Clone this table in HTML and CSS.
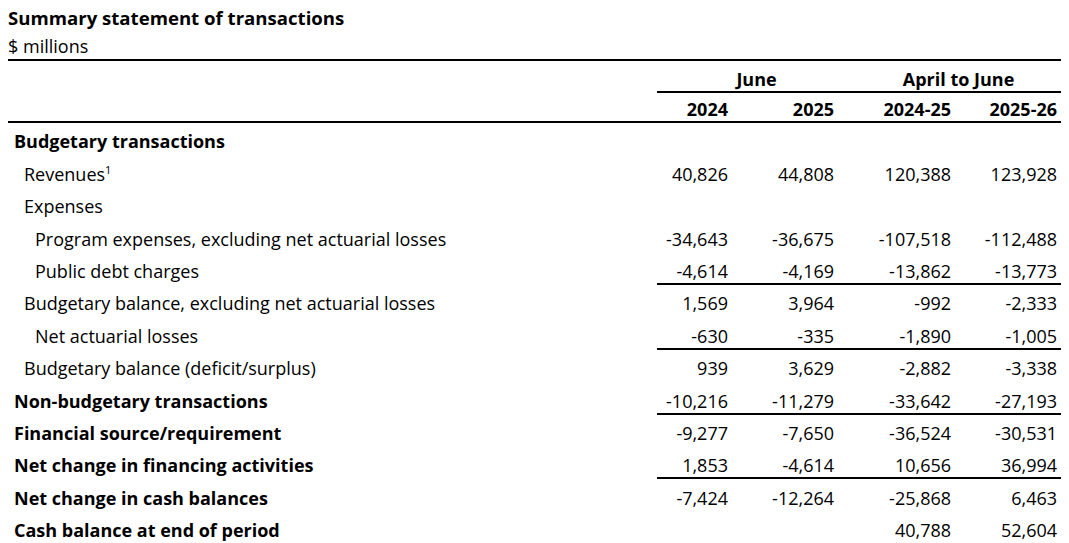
FILE: index.html
```html
<!DOCTYPE html>
<html lang="en">
<head>
<meta charset="utf-8">
<title>Summary statement of transactions</title>
<link rel="stylesheet" href="styles.css">
</head>
<body>
<div class="page">
  <h1 class="title">Summary statement of transactions</h1>
  <p class="unit">$ millions</p>
  <table class="summary">
    <colgroup>
      <col class="c-label">
      <col class="c-1">
      <col class="c-2">
      <col class="c-3">
      <col class="c-4">
    </colgroup>
    <thead>
      <tr class="group-row">
        <th class="label-head"></th>
        <th class="group" colspan="2">June</th>
        <th class="group" colspan="2">April to June</th>
      </tr>
      <tr class="year-row">
        <th class="label-head"></th>
        <th class="num">2024</th>
        <th class="num">2025</th>
        <th class="num">2024-25</th>
        <th class="num">2025-26</th>
      </tr>
    </thead>
    <tbody>
      <tr>
        <td class="label lvl0 strong">Budgetary transactions</td>
        <td class="num"></td><td class="num"></td><td class="num"></td><td class="num"></td>
      </tr>
      <tr>
        <td class="label lvl1">Revenues<sup class="note">1</sup></td>
        <td class="num">40,826</td><td class="num">44,808</td><td class="num">120,388</td><td class="num">123,928</td>
      </tr>
      <tr>
        <td class="label lvl1">Expenses</td>
        <td class="num"></td><td class="num"></td><td class="num"></td><td class="num"></td>
      </tr>
      <tr>
        <td class="label lvl2">Program expenses, excluding net actuarial losses</td>
        <td class="num">-34,643</td><td class="num">-36,675</td><td class="num">-107,518</td><td class="num">-112,488</td>
      </tr>
      <tr class="ruled">
        <td class="label lvl2">Public debt charges</td>
        <td class="num">-4,614</td><td class="num">-4,169</td><td class="num">-13,862</td><td class="num">-13,773</td>
      </tr>
      <tr>
        <td class="label lvl1">Budgetary balance, excluding net actuarial losses</td>
        <td class="num">1,569</td><td class="num">3,964</td><td class="num">-992</td><td class="num">-2,333</td>
      </tr>
      <tr class="ruled">
        <td class="label lvl2">Net actuarial losses</td>
        <td class="num">-630</td><td class="num">-335</td><td class="num">-1,890</td><td class="num">-1,005</td>
      </tr>
      <tr>
        <td class="label lvl1">Budgetary balance (deficit/surplus)</td>
        <td class="num">939</td><td class="num">3,629</td><td class="num">-2,882</td><td class="num">-3,338</td>
      </tr>
      <tr class="ruled">
        <td class="label lvl0 strong">Non-budgetary transactions</td>
        <td class="num">-10,216</td><td class="num">-11,279</td><td class="num">-33,642</td><td class="num">-27,193</td>
      </tr>
      <tr>
        <td class="label lvl0 strong">Financial source/requirement</td>
        <td class="num">-9,277</td><td class="num">-7,650</td><td class="num">-36,524</td><td class="num">-30,531</td>
      </tr>
      <tr class="ruled">
        <td class="label lvl0 strong">Net change in financing activities</td>
        <td class="num">1,853</td><td class="num">-4,614</td><td class="num">10,656</td><td class="num">36,994</td>
      </tr>
      <tr>
        <td class="label lvl0 strong">Net change in cash balances</td>
        <td class="num">-7,424</td><td class="num">-12,264</td><td class="num">-25,868</td><td class="num">6,463</td>
      </tr>
      <tr>
        <td class="label lvl0 strong">Cash balance at end of period</td>
        <td class="num"></td><td class="num"></td><td class="num">40,788</td><td class="num">52,604</td>
      </tr>
    </tbody>
  </table>
</div>
</body>
</html>
```

FILE: styles.css
```css
html, body {
  margin: 0;
  padding: 0;
  background: #ffffff;
}

.page {
  padding: 5px 8px 0 8px;
  font-family: "Open Sans", "Noto Sans", "Liberation Sans", sans-serif;
  color: #000000;
}

.title {
  margin: 0;
  font-size: 18.6px;
  line-height: 26px;
  font-weight: 700;
}

.unit {
  margin: 4px 0 0 0;
  font-size: 18px;
  line-height: 22px;
}

.summary {
  margin-top: 2px;
  width: 1053px;
  table-layout: fixed;
  border-collapse: separate;
  border-spacing: 0;
  font-size: 18px;
}

.c-label { width: 649px; }
.c-1 { width: 75px; }
.c-2 { width: 106px; }
.c-3 { width: 117px; }
.c-4 { width: 106px; }

.summary th,
.summary td {
  padding: 0 4px;
  border-bottom: 2px solid transparent;
  white-space: nowrap;
  vertical-align: bottom;
}

.summary .group-row th {
  border-top: 2px solid #000;
  height: 30px;
  font-weight: 700;
}

.summary .group-row .group {
  text-align: center;
  padding-left: 22px;
  border-bottom-color: #000;
}

.summary .year-row th {
  height: 28px;
  border-bottom-color: #000;
  font-weight: 700;
}

.summary tbody tr {
  height: 32.4px;
}

.summary .num {
  text-align: right;
}

.summary .label {
  text-align: left;
}

.summary td.lvl0 { padding-left: 6px; }
.summary td.lvl1 { padding-left: 16px; }
.summary td.lvl2 { padding-left: 27px; }

.summary .strong { font-weight: 700; }

.summary .ruled .num {
  border-bottom-color: #000;
}

.note {
  font-size: 11px;
  line-height: 0;
  vertical-align: 7px;
}
```
